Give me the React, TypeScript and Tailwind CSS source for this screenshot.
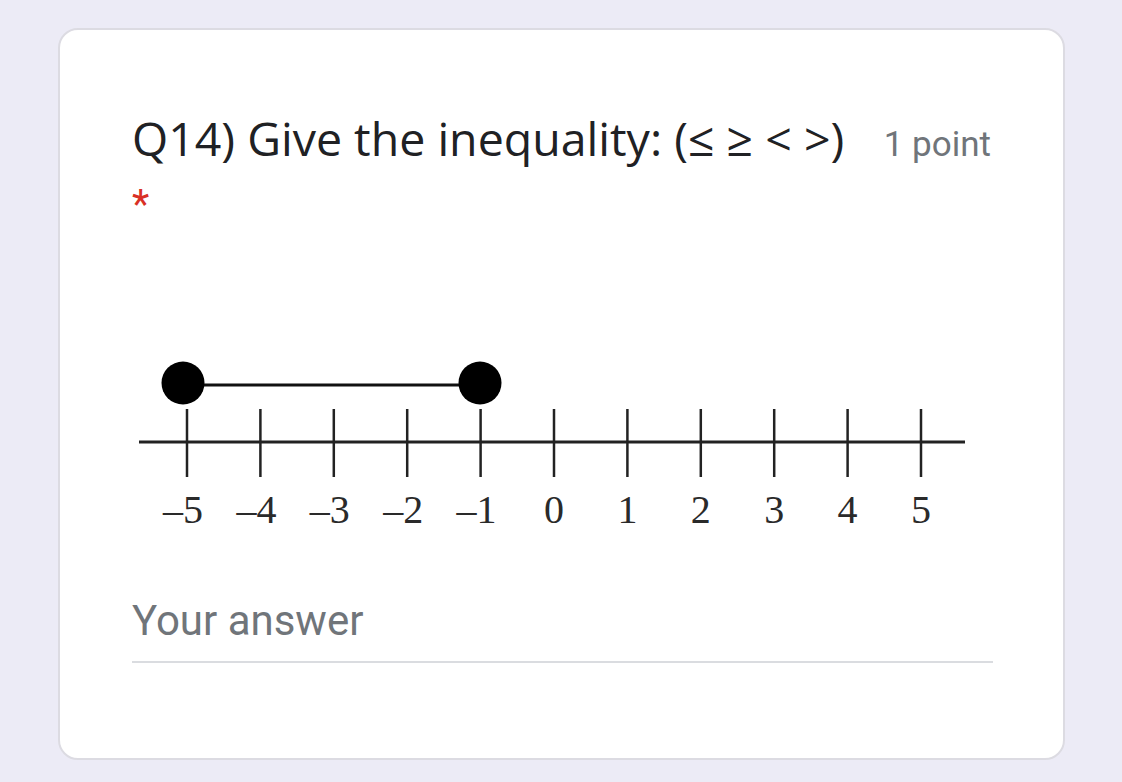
import React from 'react';

const ticks = [-5, -4, -3, -2, -1, 0, 1, 2, 3, 4, 5];

const NumberLine = () => {
  const x0 = 48;
  const step = 73.4;
  return (
    <svg width="840" height="200" viewBox="0 0 840 200" className="block">
      <line x1="48" y1="40" x2="345" y2="40" stroke="#111" strokeWidth="3" />
      <circle cx="48" cy="38" r="21.5" fill="#000" />
      <circle cx="345" cy="38" r="21.5" fill="#000" />
      <line x1="4" y1="97" x2="830" y2="97" stroke="#222" strokeWidth="3" />
      {ticks.map((t, i) => (
        <g key={t}>
          <line
            x1={x0 + i * step + 4}
            y1="64"
            x2={x0 + i * step + 4}
            y2="132"
            stroke="#222"
            strokeWidth="2.5"
          />
          <text
            x={x0 + i * step + 4 + (t < 0 ? -4 : 0)}
            y="178"
            textAnchor="middle"
            fontFamily="'Liberation Serif', serif"
            fontSize="40"
            fill="#2a2a2a"
          >
            {t < 0 ? '\u2013' + Math.abs(t) : t}
          </text>
        </g>
      ))}
    </svg>
  );
};

export default function App() {
  return (
    <div className="min-h-[782px] w-full bg-[#ecebf6] pl-[58px] pr-[57px] pt-[28px] pb-[22px]">
      <div className="h-[732px] rounded-[20px] border-2 border-[#dcdbe2] bg-white pl-[72px] pr-[72px] pt-[80px]">
        <div className="flex items-baseline justify-between">
          <h2
            className="text-[46.5px] leading-[56px] text-[#202124]"
            style={{ fontFamily: "'Open Sans', sans-serif" }}
          >
            Q14) Give the inequality: (≤ ≥ &lt; &gt;)
          </h2>
          <span
            className="text-[35px] text-[#70757a]"
            style={{ fontFamily: "Roboto, sans-serif" }}
          >
            1 point
          </span>
        </div>
        <div className="mt-[13px] text-[40px] leading-[40px] text-[#d93025]" style={{ fontFamily: "Roboto, sans-serif" }}>
          *
        </div>
        <div className="mt-[120px] ml-[3px]">
          <NumberLine />
        </div>
        <div className="mt-[54px] w-[861px] border-b-2 border-[#dadce0] pb-[18px]">
          <span className="text-[42px] leading-[44px] text-[#70757a]" style={{ fontFamily: "Roboto, sans-serif" }}>
            Your answer
          </span>
        </div>
      </div>
    </div>
  );
}
